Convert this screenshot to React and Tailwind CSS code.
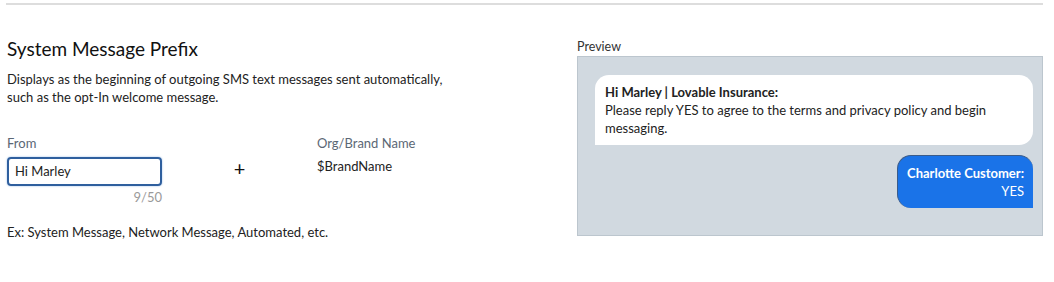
export default function App() {
  return (
    <div className="w-[1054px] h-[282px] bg-white text-[#222] font-['Lato',sans-serif] overflow-hidden">
      {/* top divider */}
      <div className="mt-[3px] ml-[6px] mr-[11px] h-[2px] bg-[#dddddd]" />

      <div className="flex pl-[7px] pr-[11px]">
        {/* Left column — form */}
        <div className="flex-1 pt-[30px]">
          <h2 className="text-[19px] leading-[28px] text-[#111]">System Message Prefix</h2>
          <p className="mt-[7px] text-[13px] leading-[18px] text-[#222] w-[460px]">
            Displays as the beginning of outgoing SMS text messages sent automatically, such as the opt-In welcome message.
          </p>

          <div className="mt-[28px] flex">
            <div className="w-[155px]">
              <label className="block text-[13px] leading-[18px] text-[#5b6775]">From</label>
              <div className="mt-[5px] h-[29px] rounded-[4px] border-2 border-[#2f5f9e] shadow-[0_0_2px_#8fb6e6] flex items-center px-[6px] text-[13px] text-[#222]">
                Hi Marley
              </div>
              <div className="mt-[2px] text-right text-[13px] leading-[18px] text-[#9a9a9a]">9/50</div>
            </div>
            <div className="w-[155px] flex justify-center pt-[24px]">
              <span className="text-[20px] leading-[20px] text-[#111]">+</span>
            </div>
            <div>
              <div className="text-[13px] leading-[18px] text-[#5b6775]">Org/Brand Name</div>
              <div className="mt-[5px] text-[13px] leading-[18px] text-[#222]">$BrandName</div>
            </div>
          </div>

          <p className="mt-[17px] text-[13px] leading-[18px] text-[#222]">
            Ex: System Message, Network Message, Automated, etc.
          </p>
        </div>

        {/* Right column — preview */}
        <div className="w-[466px] pt-[34px]">
          <div className="text-[12.5px] leading-[16px] text-[#333]">Preview</div>
          <div className="mt-[1px] h-[180px] bg-[#d1d9e0] border border-[#bcc6ce] pt-[18px] pl-[17px] pr-[9px]">
            <div className="bg-white rounded-[14px] rounded-bl-none px-[10px] pt-[8px] pb-[8px] text-[13px] leading-[18px] text-[#222]">
              <div className="font-bold">Hi Marley | Lovable Insurance:</div>
              <div>Please reply YES to agree to the terms and privacy policy and begin messaging.</div>
            </div>
            <div className="mt-[10px] flex justify-end">
              <div className="bg-[#1a73e8] border border-[#3b5c8a] border-r-0 border-b-0 rounded-[14px] rounded-br-none px-[9px] pt-[8px] pb-[8px] text-right text-[13px] leading-[18px] text-white">
                <div className="font-bold">Charlotte Customer:</div>
                <div>YES</div>
              </div>
            </div>
          </div>
        </div>
      </div>
    </div>
  );
}
